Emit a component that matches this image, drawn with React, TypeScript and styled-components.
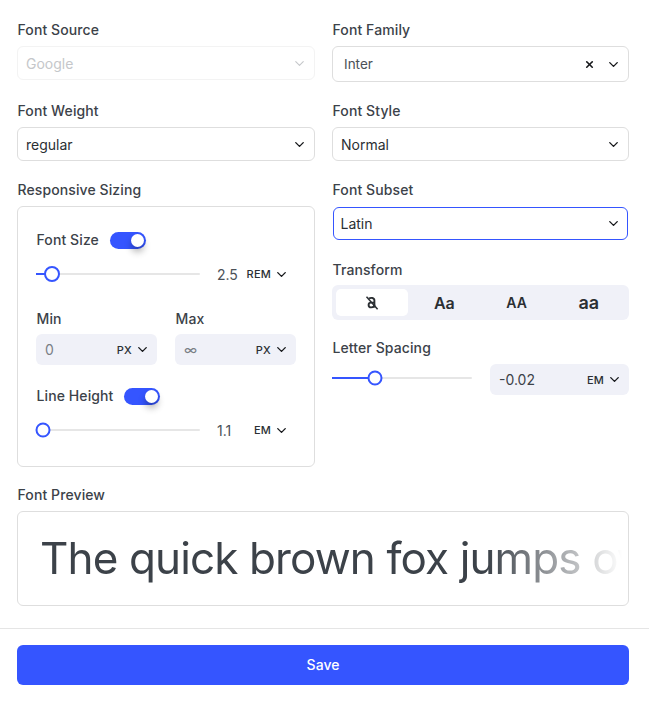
import React from 'react'
import styled, { createGlobalStyle } from 'styled-components'
import { ChevronDown, X } from 'lucide-react'

const BLUE = '#3555ff'
const INPUT_BG = '#f0f1f8'
const BORDER = '#dedede'
const TEXT = '#3c4249'

const GlobalStyle = createGlobalStyle`
  * {
    box-sizing: border-box;
  }

  body {
    margin: 0;
    background: #fff;
    color: ${TEXT};
    font-family: Inter, "Liberation Sans", sans-serif;
    font-size: 14px;
  }
`

const Page = styled.div`
  width: 649px;
  height: 710px;
  overflow: hidden;
`

const Content = styled.main`
  padding: 20px 20px 0 17px;
`

const Columns = styled.div`
  display: grid;
  grid-template-columns: 298px 297px;
  column-gap: 17px;
  align-items: start;
`

const Column = styled.div`
  display: flex;
  flex-direction: column;
  gap: 19px;
`

const Field = styled.div<{ $gap?: number; $top?: number }>`
  display: flex;
  flex-direction: column;
  gap: ${props => props.$gap ?? 6}px;
  margin-top: ${props => props.$top ?? 0}px;
`

const Label = styled.label`
  display: block;
  height: 20px;
  padding-left: 0.5px;
  line-height: 20px;
  font-size: 14px;
  font-weight: 500;
  letter-spacing: 0.1px;
  color: ${TEXT};
`

const Select = styled.div<{ $height?: number; $disabled?: boolean; $focused?: boolean; $inset?: number }>`
  display: flex;
  align-items: center;
  justify-content: space-between;
  height: ${props => props.$height ?? 34}px;
  margin: 0 ${props => (props.$focused ? 1 : 0)}px;
  padding: 0 ${props => (props.$focused ? 6 : 7)}px 0 ${props => props.$inset ?? (props.$focused ? 6.5 : 8)}px;
  border: ${props => (props.$focused ? `1.5px solid ${BLUE}` : `1px solid ${props.$disabled ? '#f3f3f3' : BORDER}`)};
  border-radius: 6px;
  background: #fff;
  font-size: 14px;
  color: ${props => (props.$disabled ? '#c5c7ca' : '#2b2f33')};

  svg {
    flex: none;
    color: ${props => (props.$disabled ? '#c5c7ca' : '#16181b')};
  }
`

const FamilyName = styled.span`
  font-size: 13.5px;
  color: #4b5158;
`

const SelectIcons = styled.div`
  display: flex;
  align-items: center;
  gap: 11px;
`

const SizingBox = styled.div`
  height: 261px;
  padding: 23px 18px 0;
  border: 1px solid ${BORDER};
  border-radius: 6px;
`

const ToggleRow = styled.div<{ $top?: number }>`
  display: flex;
  align-items: center;
  gap: 11px;
  height: 20px;
  margin-top: ${props => props.$top ?? 0}px;
`

const Toggle = styled.span`
  position: relative;
  display: block;
  width: 36px;
  height: 17px;
  border-radius: 9px;
  background: ${BLUE};

  &::after {
    content: '';
    position: absolute;
    top: 2px;
    right: 2px;
    width: 13px;
    height: 13px;
    border-radius: 50%;
    background: #fff;
    box-shadow: 0 5px 7px rgba(0, 0, 0, 0.3);
  }
`

const SliderRow = styled.div`
  display: flex;
  align-items: center;
  height: 20px;
  margin-top: 14px;
`

const Slider = styled.div<{ $width: number; $raise?: number }>`
  position: relative;
  flex: none;
  width: ${props => props.$width}px;
  height: 2px;
  margin-bottom: ${props => props.$raise ?? 0}px;
  border-radius: 1px;
  background: #e6e6e6;
`

const SliderFill = styled.div`
  position: absolute;
  left: 0;
  top: 0;
  height: 100%;
  background: ${BLUE};
`

const SliderThumb = styled.div<{ $size?: number }>`
  position: absolute;
  top: 50%;
  width: ${props => props.$size ?? 15}px;
  height: ${props => props.$size ?? 15}px;
  border: 2px solid ${BLUE};
  border-radius: 50%;
  background: #fff;
  transform: translate(-50%, -50%);
`

const Value = styled.span`
  margin-left: 17px;
  font-size: 14px;
  color: #4b5158;
`

const Unit = styled.span`
  display: flex;
  align-items: center;
  gap: 3px;
  margin-left: auto;
  padding-right: 7px;
  font-size: 11px;
  font-weight: 500;
  letter-spacing: 0.2px;
  color: #2b2f33;

  svg {
    color: #16181b;
  }
`

const Limits = styled.div`
  display: grid;
  grid-template-columns: 121px 121px;
  column-gap: 18px;
  margin-top: 25px;
`

const NumberInput = styled.div<{ $muted?: boolean; $height?: number }>`
  display: flex;
  align-items: center;
  height: ${props => props.$height ?? 31}px;
  padding-left: 9px;
  border-radius: 6px;
  background: ${INPUT_BG};
  font-size: 14px;
  color: ${props => (props.$muted ? '#7a7f86' : TEXT)};
`

const Segments = styled.div`
  display: grid;
  grid-template-columns: repeat(4, 1fr);
  height: 35px;
  padding: 4px;
  border-radius: 6px;
  background: ${INPUT_BG};
`

const Segment = styled.div<{ $active?: boolean; $size?: number }>`
  display: flex;
  align-items: center;
  justify-content: center;
  border-radius: 5px;
  background: ${props => (props.$active ? '#fff' : 'transparent')};
  font-size: ${props => props.$size ?? 16}px;
  font-weight: 600;
  color: #2b2f33;
`

const SpacingRow = styled.div`
  display: flex;
  align-items: center;
  gap: 18px;
`

const SpacingInput = styled(NumberInput)`
  flex: 1;
`

const PreviewBox = styled.div`
  display: flex;
  align-items: center;
  height: 95px;
  padding-left: 22px;
  border: 1px solid ${BORDER};
  border-radius: 6px;
`

const PreviewViewport = styled.div`
  flex: 1;
  min-width: 0;
  overflow: hidden;
  -webkit-mask-image: linear-gradient(to right, #000 76%, transparent 99%);
  mask-image: linear-gradient(to right, #000 76%, transparent 99%);
`

const PreviewText = styled.div`
  font-size: 44px;
  line-height: 1.2;
  letter-spacing: -0.02em;
  white-space: nowrap;
  color: ${TEXT};
`

const Divider = styled.hr`
  height: 1px;
  margin: 22px 0 16px;
  border: 0;
  background: #e5e5e5;
`

const Footer = styled.div`
  padding: 0 20px 0 17px;
`

const SaveButton = styled.button`
  display: block;
  width: 612px;
  height: 40px;
  padding: 0 0 2px;
  border: 0;
  border-radius: 6px;
  background: ${BLUE};
  color: #fff;
  font-family: inherit;
  font-size: 14px;
  font-weight: 500;
`

const Chevron = () => <ChevronDown size={15} strokeWidth={2.2} />

const NoTransformIcon = () => (
  <svg width="16" height="16" viewBox="0 0 16 16" fill="none" stroke="#2b2f33" strokeWidth="1.9">
    <path d="M5 3.6C6.6 2.4 10.4 2.6 10.4 5.4V12.6" />
    <path d="M10.4 7.6H7.2C5.6 7.6 4.6 8.5 4.6 9.9C4.6 11.3 5.6 12.4 7.2 12.4C8.8 12.4 10.4 11.5 10.4 9.8" />
    <path d="M2.5 1.8L13.6 14.2" strokeWidth="1.5" />
  </svg>
)

type SliderProps = {
  width: number
  thumbAt: number
  fillTo?: number
  thumbSize?: number
  raise?: number
}

const RangeSlider = ({ width, thumbAt, fillTo, thumbSize, raise }: SliderProps) => (
  <Slider $width={width} $raise={raise}>
    {fillTo ? <SliderFill style={{ width: fillTo }} /> : null}
    <SliderThumb $size={thumbSize} style={{ left: thumbAt }} />
  </Slider>
)

export default function App() {
  return (
    <Page>
      <GlobalStyle />
      <Content>
        <Columns>
          <Column>
            <Field>
              <Label>Font Source</Label>
              <Select $disabled $height={34}>
                Google
                <ChevronDown size={15} strokeWidth={1.8} />
              </Select>
            </Field>
            <Field $top={2}>
              <Label>Font Weight</Label>
              <Select>
                regular
                <Chevron />
              </Select>
            </Field>
            <Field>
              <Label>Responsive Sizing</Label>
              <SizingBox>
                <ToggleRow>
                  <Label as="span">Font Size</Label>
                  <Toggle />
                </ToggleRow>
                <SliderRow>
                  <RangeSlider width={164} thumbAt={16} fillTo={16} thumbSize={16} />
                  <Value>2.5</Value>
                  <Unit>
                    REM
                    <Chevron />
                  </Unit>
                </SliderRow>
                <Limits>
                  <Field $gap={5}>
                    <Label>Min</Label>
                    <NumberInput $muted>
                      0
                      <Unit>
                        PX
                        <Chevron />
                      </Unit>
                    </NumberInput>
                  </Field>
                  <Field $gap={5}>
                    <Label>Max</Label>
                    <NumberInput $muted>
                      ∞
                      <Unit>
                        PX
                        <Chevron />
                      </Unit>
                    </NumberInput>
                  </Field>
                </Limits>
                <ToggleRow $top={21}>
                  <Label as="span">Line Height</Label>
                  <Toggle />
                </ToggleRow>
                <SliderRow>
                  <RangeSlider width={164} thumbAt={7} />
                  <Value>1.1</Value>
                  <Unit>
                    EM
                    <Chevron />
                  </Unit>
                </SliderRow>
              </SizingBox>
            </Field>
          </Column>
          <Column>
            <Field>
              <Label>Font Family</Label>
              <Select $height={36} $inset={11}>
                <FamilyName>Inter</FamilyName>
                <SelectIcons>
                  <X size={11} strokeWidth={3.5} />
                  <Chevron />
                </SelectIcons>
              </Select>
            </Field>
            <Field>
              <Label>Font Style</Label>
              <Select>
                Normal
                <Chevron />
              </Select>
            </Field>
            <Field $gap={7}>
              <Label>Font Subset</Label>
              <Select $focused $height={33}>
                Latin
                <Chevron />
              </Select>
            </Field>
            <Field $gap={5} $top={1}>
              <Label>Transform</Label>
              <Segments>
                <Segment $active>
                  <NoTransformIcon />
                </Segment>
                <Segment>Aa</Segment>
                <Segment $size={14}>AA</Segment>
                <Segment $size={18}>aa</Segment>
              </Segments>
            </Field>
            <Field $top={-1}>
              <Label>Letter Spacing</Label>
              <SpacingRow>
                <RangeSlider width={140} thumbAt={43} fillTo={43} raise={3} />
                <SpacingInput $height={31}>
                  -0.02
                  <Unit>
                    EM
                    <Chevron />
                  </Unit>
                </SpacingInput>
              </SpacingRow>
            </Field>
          </Column>
        </Columns>
        <Field $top={18}>
          <Label>Font Preview</Label>
          <PreviewBox>
            <PreviewViewport>
              <PreviewText>The quick brown fox jumps over the lazy dog</PreviewText>
            </PreviewViewport>
          </PreviewBox>
        </Field>
      </Content>
      <Divider />
      <Footer>
        <SaveButton>Save</SaveButton>
      </Footer>
    </Page>
  )
}
